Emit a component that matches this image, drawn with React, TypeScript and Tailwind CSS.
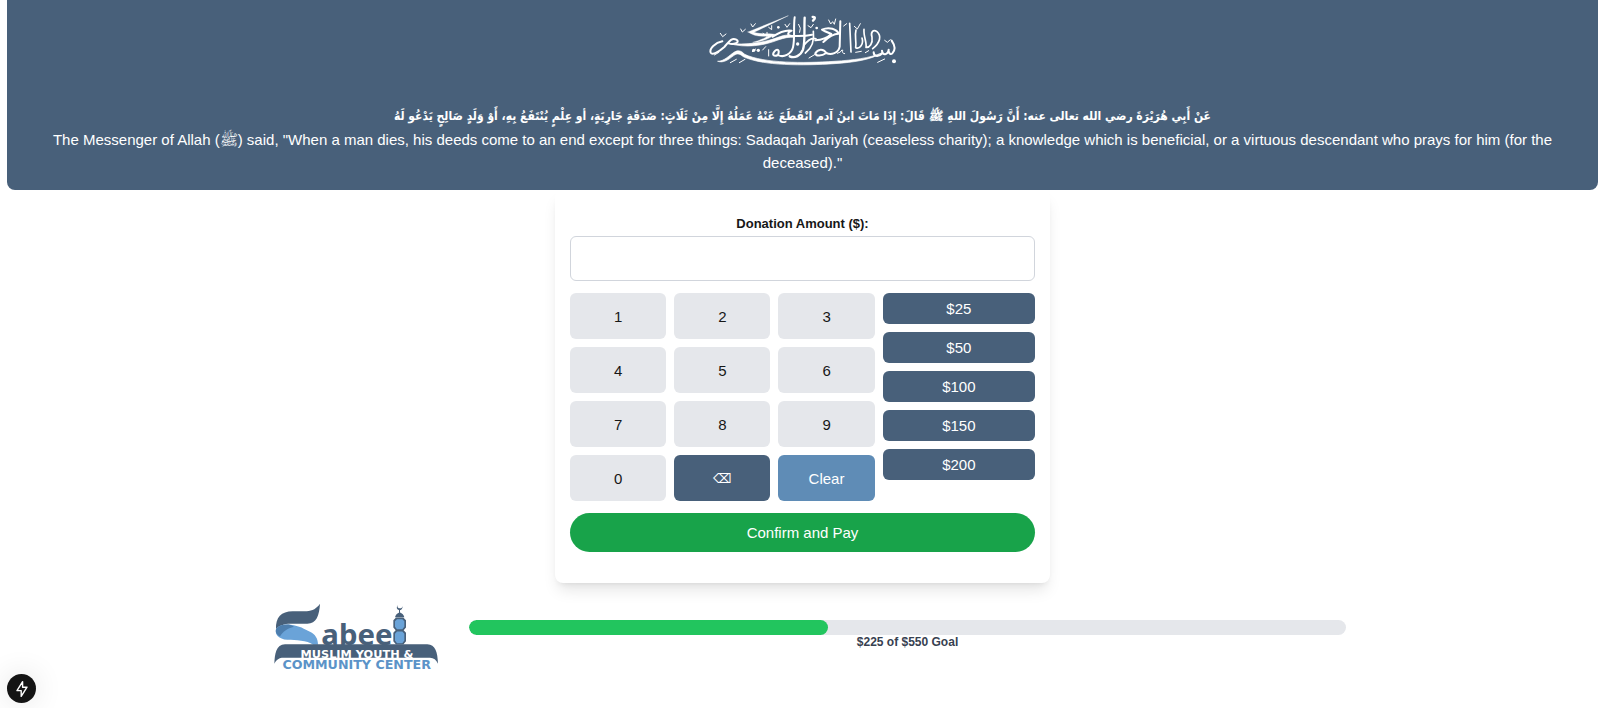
import { useState } from "react";

const DIGITS = ["1", "2", "3", "4", "5", "6", "7", "8", "9", "0"];
const PRESETS = [25, 50, 100, 150, 200];
const RAISED = 225;
const GOAL = 550;

function Bismillah() {
  return (
    <svg
      viewBox="7 0 660 240"
      className="h-20 w-[220px]"
      role="img"
      aria-label="Bismillah"
      fill="none"
      stroke="#fff"
      strokeLinecap="round"
      strokeLinejoin="round"
    >
      <path d="M82 184C100 184 116 166 130 157C142 149 152 152 162 163C220 190 340 190 430 184C490 180 535 175 575 158C540 180 490 187 430 191C340 197 216 198 158 170C146 160 140 160 130 166C112 180 98 190 82 184Z" fill="#fff" strokeWidth="2" />
      <path d="M575 159C566 171 549 171 549 157M594 149C592 165 575 168 574 152M603 122C614 138 613 152 605 160C600 165 594 160 594 152" strokeWidth="6" />
      <path d="M95 124C74 128 55 146 60 158C65 168 86 154 101 141C114 127 121 112 137 119C150 126 130 136 114 130" strokeWidth="6" />
      <path d="M114 130C165 136 222 128 262 112C286 103 300 103 312 112C296 110 280 114 262 120C222 136 165 146 114 130Z" fill="#fff" strokeWidth="2" />
      <path d="M172 96L293 47C262 62 224 80 190 97C214 105 236 98 254 103C240 115 206 128 186 127C206 122 224 114 232 108C206 111 186 106 172 96Z" fill="#fff" strokeWidth="1" />
      <path d="M246 110C264 98 282 88 303 92C288 99 288 108 310 108C330 109 348 108 364 104" strokeWidth="6" />
      <path d="M312 52C308 78 313 119 307 142C302 163 278 174 262 165M262 165C250 171 243 165 251 155C260 144 268 150 262 165" strokeWidth="6" />
      <path d="M342 53C340 86 344 128 337 149C330 167 312 176 297 169" strokeWidth="7" />
      <path d="M368 94C372 125 360 147 344 159M340 136C350 122 364 112 376 116" strokeWidth="5" />
      <path d="M374 121C397 120 413 111 422 102C410 97 400 93 394 89C416 79 438 88 444 101C428 101 411 113 398 126" strokeWidth="6" />
      <path d="M449 64L447 140C444 159 421 166 407 159M407 159C393 168 375 170 374 160C381 147 398 144 407 159" strokeWidth="6" />
      <path d="M477 70L481 156M496 90C491 111 498 119 495 143C507 149 520 132 514 114M520 88C518 108 529 128 526 142C537 143 547 130 544 112C539 98 547 86 559 95C573 108 569 128 546 146" strokeWidth="5" />
      <path d="M366 51Q379 50 367 62" strokeWidth="7" />
      <g strokeWidth="3">
        <path d="M89 100l7 10 10-8M150 87l5 9 9-8M181 72l5 9 8-10M283 73l6 9 8-11M217 100l12 9 0-12M234 82l9 7 0-12M324 73q9 11 3 24M352 77l9 6 7-10M414 60l6 12 6-7 5 8 4-16M459 78l9-7M491 79l9 8 9-16M582 121l8 6 9-8" />
        <path d="M119 188l18-10M146 188l17-10M71 165l14-8M185 155l10-8M216 150l9-10M234 149l0 19M355 174l20-12M440 160q11-2 14-10M456 151q-3 10 6 10M495 157l17-3M524 158l10-6M561 187l21-10" />
      </g>
      <g fill="#fff" stroke="none">
        <circle cx="189" cy="151" r="5" /><circle cx="203" cy="151" r="5" />
        <circle cx="321" cy="132" r="5" /><circle cx="610" cy="184" r="6" />
        <circle cx="263" cy="82" r="4" /><circle cx="378" cy="84" r="4" />
      </g>
    </svg>
  );
}

function SabeelLogo() {
  return (
    <svg
      viewBox="45 38 492 200"
      className="h-[67px] w-[164px] shrink-0 overflow-visible"
      role="img"
      aria-label="Sabeel Muslim Youth & Community Center"
    >
      <path d="M48 116C46 80 64 62 98 62H140C158 62 170 54 180 40C178 75 169 100 142 100H92C72 100 58 106 48 116Z" fill="#48607a" />
      <path d="M48 116C58 103 74 101 92 103C118 106 134 116 150 124C166 132 174 144 174 163H160C140 148 108 150 82 148C56 145 44 132 48 116Z" fill="#6aa3d8" />
      <path d="M48 116C56 105 70 101 86 102C94 104 98 106 102 109C82 114 68 124 60 138C49 132 46 124 48 116Z" fill="#4d7eae" />
      <path d="M43 220C44 190 48 162 75 161H502C526 162 533 184 534 220C529 208 521 202 510 202H70C58 202 49 207 43 220Z" fill="#48607a" />
      <path d="M408 81h22l8 8v22l-7 8 7 8v25l-8 10h-22l-8-10v-25l7-8-7-8V89z" fill="#48607a" />
      <path d="M411 86h16l6 6v17l-6 7h-16l-6-7V92zM411 123h16l6 7v20l-6 8h-16l-6-8v-20z" fill="#6aa3d8" />
      <path d="M405 80q2-10 14-15q12 5 14 15zM417 54h3v13h-3z" fill="#48607a" />
      <path d="M413 43q-3 10 6 11q7 0 9-7q-1 12-10 12q-12-2-5-16" fill="#48607a" />
      <g fontFamily="'DejaVu Sans', sans-serif" fontWeight="700">
        <text x="184" y="162" fontFamily="'Noto Sans', sans-serif" fontSize="88" fill="#48607a">abee</text>
        <text x="291" y="201" textAnchor="middle" fontSize="34" fill="#fff">MUSLIM YOUTH &amp;</text>
        <text x="290" y="236" textAnchor="middle" fontSize="38" fill="#5b93c8">COMMUNITY CENTER</text>
      </g>
    </svg>
  );
}

export default function App() {
  const [amount, setAmount] = useState("");

  return (
    <div className="relative min-h-screen bg-white pr-0.5 pl-[7px] font-['Liberation_Sans',Arial,sans-serif] text-[15px] leading-[23px] text-[#171717]">
      <header className="flex flex-col items-center rounded-b-lg bg-[#48607a] px-4 pb-4 text-center text-white">
        <Bismillah />
        <div className="pt-[25px]">
          <p dir="rtl" lang="ar" className="font-['DejaVu_Sans_Condensed','DejaVu_Sans',sans-serif] text-[12px] font-bold">
            عَنْ أَبِي هُرَيْرَةَ رضي الله تعالى عنه: أَنَّ رَسُولَ اللهِ ﷺ قَالَ: إِذَا مَاتَ ابنُ آدم انْقَطَعَ عَنْهُ عَمَلُهُ إِلَّا مِنْ ثَلَاثٍ: صَدَقَةٍ جَارِيَةٍ، أو عِلْمٍ يُنْتَفَعُ بِهِ، أَوْ وَلَدٍ صَالِحٍ يَدْعُو لَهُ
          </p>
          <p>
            The Messenger of Allah (ﷺ) said, "When a man dies, his deeds come to an end except for three things: Sadaqah Jariyah (ceaseless charity); a knowledge which is beneficial, or a virtuous descendant who prays for him (for the deceased)."
          </p>
        </div>
      </header>

      <main>
        <form
          className="mx-auto flex max-w-[495px] flex-col gap-3 rounded-lg bg-white px-[15px] pt-[22px] pb-[31px] shadow-lg"
          onSubmit={(e) => e.preventDefault()}
        >
          <div className="flex flex-col text-center">
            <label htmlFor="amount" className="text-[13px] leading-6 font-bold">
              Donation Amount ($):
            </label>
            <input
              id="amount"
              readOnly
              value={amount}
              className="h-[45px] rounded-md border border-gray-300 text-center text-xl outline-none"
            />
          </div>
          <div className="grid grid-cols-[2fr_1fr] items-start gap-2">
            <div className="grid grid-cols-3 gap-2">
              {DIGITS.map((d) => (
                <button
                  key={d}
                  type="button"
                  onClick={() => setAmount(amount + d)}
                  className="h-[46px] rounded-md bg-gray-200"
                >
                  {d}
                </button>
              ))}
              <button
                type="button"
                aria-label="Delete last digit"
                onClick={() => setAmount(amount.slice(0, -1))}
                className="h-[46px] rounded-md bg-[#48607a] font-['Liberation_Sans','DejaVu_Sans',sans-serif] text-[13px] text-white"
              >
                ⌫
              </button>
              <button
                type="button"
                onClick={() => setAmount("")}
                className="h-[46px] rounded-md bg-[#5f8cb6] text-white"
              >
                Clear
              </button>
            </div>
            <div className="flex flex-col gap-2">
              {PRESETS.map((p) => (
                <button
                  key={p}
                  type="button"
                  onClick={() => setAmount(String(p))}
                  className="rounded-md bg-[#48607a] py-1 text-white"
                >
                  ${p}
                </button>
              ))}
            </div>
          </div>
          <button type="submit" className="rounded-full bg-[#18a34a] py-2 text-white">
            Confirm and Pay
          </button>
        </form>
      </main>

      <footer className="pt-5 pl-4">
        <div className="mx-auto flex max-w-[1071px] items-start gap-[30px]">
          <SabeelLogo />
          <div className="flex-1 pt-[17px]">
            <div className="h-[15px] overflow-hidden rounded-full bg-gray-200">
              <div
                className="h-full rounded-full bg-[#22c55e]"
                style={{ width: `${(RAISED / GOAL) * 100}%` }}
              />
            </div>
            <p className="text-center text-[12px] leading-[15px] font-bold text-[#374151]">
              ${RAISED} of ${GOAL} Goal
            </p>
          </div>
        </div>
      </footer>

      <button
        type="button"
        aria-label="Open developer tools"
        className="fixed bottom-[5px] left-[7px] flex size-[29px] items-center justify-center rounded-full bg-[#141414] shadow-[0_0_30px_rgba(0,0,0,0.12)]"
      >
        <svg viewBox="-10 -10 20 20" className="size-5" fill="none" stroke="#fff" strokeWidth="1.4" strokeLinejoin="round">
          <path d="M0.6 -7.4L-5 1.6H-0.8V7.4L5 -1.8H0.6Z" />
        </svg>
      </button>
    </div>
  );
}
